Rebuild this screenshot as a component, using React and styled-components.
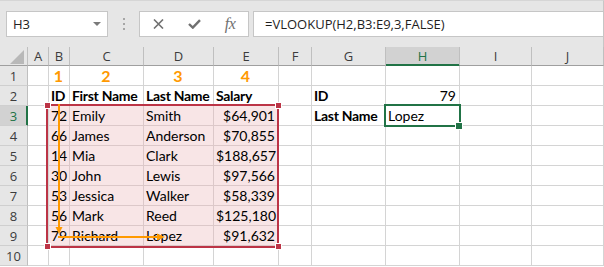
import React from 'react';
import styled, { createGlobalStyle } from 'styled-components';

const GlobalStyle = createGlobalStyle`
  html, body {
    margin: 0;
    padding: 0;
    background: #fff;
  }
  body {
    font-family: 'Open Sans', 'Liberation Sans', sans-serif;
  }
`;

const GREEN = '#217346';
const RED = '#bc3446';
const ORANGE = '#ff9900';

const COLUMNS = ['A', 'B', 'C', 'D', 'E', 'F', 'G', 'H', 'I', 'J'];
const WIDTHS = [28, 21, 21, 74, 70, 65, 33, 74, 74, 72, 72];

const people = [
    ['72', 'Emily', 'Smith', '$64,901'],
    ['66', 'James', 'Anderson', '$70,855'],
    ['14', 'Mia', 'Clark', '$188,657'],
    ['30', 'John', 'Lewis', '$97,566'],
    ['53', 'Jessica', 'Walker', '$58,339'],
    ['56', 'Mark', 'Reed', '$125,180'],
    ['79', 'Richard', 'Lopez', '$91,632'],
];

function buildRows() {
    const rows = Array.from({ length: 10 }, () => ({}));
    ['1', '2', '3', '4'].forEach((n, i) => {
        rows[0][COLUMNS[i + 1]] = { text: n, orange: true, align: 'center' };
    });
    ['ID', 'First Name', 'Last Name', 'Salary'].forEach((t, i) => {
        rows[1][COLUMNS[i + 1]] = { text: t, bold: true };
    });
    rows[1].G = { text: 'ID', bold: true };
    rows[1].H = { text: '79', align: 'right' };
    people.forEach(([id, first, last, salary], i) => {
        const row = rows[i + 2];
        row.B = { text: id, align: 'right' };
        row.C = { text: first };
        row.D = { text: last };
        row.E = { text: salary, align: 'right' };
    });
    rows[2].G = { text: 'Last Name', bold: true };
    rows[2].H = { text: 'Lopez' };
    return rows;
}

const rows = buildRows();

const Page = styled.div`
  position: relative;
  width: 604px;
  height: 267px;
  overflow: hidden;
  background: #fff;
`;

const Toolbar = styled.div`
  display: flex;
  align-items: center;
  box-sizing: border-box;
  height: 47px;
  padding-left: 6px;
  background: #e6e6e6;
  border-top: 1px solid #d6d6d6;
  border-right: 1px solid #c6c6c6;
`;

const Box = styled.div`
  display: flex;
  align-items: center;
  box-sizing: border-box;
  height: 26px;
  background: #fff;
  border: 1px solid #c6c6c6;
`;

const NameBox = styled(Box)`
  width: 102px;
  justify-content: space-between;
  padding: 0 6px 0 6px;
  font-size: 13px;
  color: #222;
`;

const Caret = styled.span`
  width: 0;
  height: 0;
  border-left: 4px solid transparent;
  border-right: 4px solid transparent;
  border-top: 4px solid #7a7a7a;
`;

const Grip = styled.div`
  display: flex;
  flex-direction: column;
  align-items: center;
  gap: 3px;
  width: 31px;
`;

const Dot = styled.span`
  width: 2px;
  height: 2px;
  background: #a6a6a6;
`;

const FxBox = styled(Box)`
  width: 110px;
`;

const IconSlot = styled.div`
  display: flex;
  align-items: center;
  justify-content: center;
  width: 36px;
  height: 100%;
  color: #707070;
`;

const FxText = styled.span`
  font-family: 'Liberation Serif', 'DejaVu Serif', serif;
  font-style: italic;
  font-size: 16px;
  letter-spacing: -0.5px;
  color: #707070;
`;

const FormulaBox = styled(Box)`
  flex: 1;
  margin-left: 4px;
  padding-left: 11px;
  border-right: none;
  font-size: 13px;
  color: #1e1e1e;
`;

const Sheet = styled.div`
  display: grid;
  grid-template-columns: ${WIDTHS.map((w) => `${w}px`).join(' ')};
  grid-template-rows: 19px repeat(10, 20px);
`;

const Corner = styled.div`
  display: flex;
  align-items: flex-end;
  justify-content: flex-end;
  box-sizing: border-box;
  padding: 0 3px 1px 0;
  background: #e6e6e6;
  border-right: 1px solid #bfbfbf;
  border-bottom: 1px solid #9f9f9f;
`;

const ColHeader = styled.div`
  box-sizing: border-box;
  padding-top: 1px;
  line-height: 17px;
  text-align: center;
  font-size: 13px;
  color: ${(p) => (p.$active ? GREEN : '#3c3c3c')};
  background: ${(p) => (p.$active ? '#d2d2d2' : '#e6e6e6')};
  border-right: 1px solid #bfbfbf;
  border-bottom: 1px solid ${(p) => (p.$active ? GREEN : '#9f9f9f')};
  box-shadow: ${(p) => (p.$active ? `inset 0 -1px 0 ${GREEN}` : 'none')};
`;

const RowHeader = styled.div`
  box-sizing: border-box;
  padding-top: 2px;
  line-height: 17px;
  text-align: center;
  font-size: 13px;
  color: ${(p) => (p.$active ? GREEN : '#3c3c3c')};
  background: ${(p) => (p.$active ? '#d2d2d2' : '#e6e6e6')};
  border-right: 1px solid ${(p) => (p.$active ? GREEN : '#bfbfbf')};
  border-bottom: 1px solid #cfcfcf;
  box-shadow: ${(p) => (p.$active ? `inset -1px 0 0 ${GREEN}` : 'none')};
`;

const Cell = styled.div`
  box-sizing: border-box;
  padding: 1px 3px 0 2px;
  line-height: 18px;
  white-space: nowrap;
  font-family: Lato, 'Liberation Sans', sans-serif;
  font-size: ${(p) => (p.$orange ? '16px' : '14px')};
  font-weight: ${(p) => (p.$bold || p.$orange ? 700 : 400)};
  letter-spacing: ${(p) => (p.$bold ? '-0.3px' : '0')};
  color: ${(p) => (p.$orange ? ORANGE : '#000')};
  text-align: ${(p) => p.$align || 'left'};
  background: ${(p) => (p.$pink ? '#f8e5e6' : '#fff')};
  border-right: 1px solid ${(p) => (p.$pink ? '#dcc8c9' : '#d4d4d4')};
  border-bottom: 1px solid ${(p) => (p.$pink ? '#dcc8c9' : '#d4d4d4')};
`;

const Overlay = styled.svg`
  position: absolute;
  left: 0;
  top: 0;
  pointer-events: none;
`;

const RangeFrame = styled.div`
  position: absolute;
  left: 46px;
  top: 104px;
  width: 233px;
  height: 144px;
  box-sizing: border-box;
  border: 2px solid ${RED};
`;

const ActiveFrame = styled.div`
  position: absolute;
  left: 384px;
  top: 104px;
  width: 77px;
  height: 23px;
  box-sizing: border-box;
  border: 2px solid ${GREEN};
`;

const Handle = styled.span`
  position: absolute;
  left: ${(p) => p.$x}px;
  top: ${(p) => p.$y}px;
  width: ${(p) => p.$size || 5}px;
  height: ${(p) => p.$size || 5}px;
  background: ${(p) => p.$color};
  box-shadow: 0 0 0 1px #fff;
`;

const isPink = (r, col) => r >= 2 && r <= 8 && ['B', 'C', 'D', 'E'].includes(col);

function App() {
    return (
        <Page>
            <GlobalStyle />
            <Toolbar>
                <NameBox>
                    H3
                    <Caret />
                </NameBox>
                <Grip>
                    <Dot />
                    <Dot />
                    <Dot />
                </Grip>
                <FxBox>
                    <IconSlot>
                        <svg width="11" height="10" viewBox="0 0 11 10">
                            <path d="M1 0.5 L10 9.5 M10 0.5 L1 9.5" stroke="currentColor" strokeWidth="1.6" fill="none" />
                        </svg>
                    </IconSlot>
                    <IconSlot>
                        <svg width="13" height="10" viewBox="0 0 13 10">
                            <path d="M1 5 L4.8 8.6 L12 1.2" stroke="currentColor" strokeWidth="2.4" fill="none" />
                        </svg>
                    </IconSlot>
                    <IconSlot>
                        <FxText>fx</FxText>
                    </IconSlot>
                </FxBox>
                <FormulaBox>=VLOOKUP(H2,B3:E9,3,FALSE)</FormulaBox>
            </Toolbar>
            <Sheet>
                <Corner>
                    <svg width="14" height="14" viewBox="0 0 14 14">
                        <polygon points="14,0 14,14 0,14" fill="#b8b8b8" />
                    </svg>
                </Corner>
                {COLUMNS.map((c) => (
                    <ColHeader key={c} $active={c === 'H'}>
                        {c}
                    </ColHeader>
                ))}
                {rows.map((row, r) => (
                    <React.Fragment key={r}>
                        <RowHeader $active={r === 2}>{r + 1}</RowHeader>
                        {COLUMNS.map((c) => {
                            const cell = row[c] || {};
                            return (
                                <Cell
                                    key={c}
                                    $pink={isPink(r, c)}
                                    $bold={cell.bold}
                                    $orange={cell.orange}
                                    $align={cell.align}
                                >
                                    {cell.text}
                                </Cell>
                            );
                        })}
                    </React.Fragment>
                ))}
            </Sheet>

            <RangeFrame />
            <Handle $x={45} $y={103} $color={RED} />
            <Handle $x={276} $y={103} $color={RED} />
            <Handle $x={45} $y={244} $color={RED} />
            <Handle $x={276} $y={244} $color={RED} />

            <ActiveFrame />
            <Handle $x={456} $y={123} $size={6} $color={GREEN} />

            <Overlay width="604" height="267" viewBox="0 0 604 267">
                <g stroke={ORANGE} strokeWidth="2" fill="none">
                    <line x1="59" y1="104" x2="59" y2="228" />
                    <line x1="58" y1="237" x2="158" y2="237" />
                </g>
                <g fill={ORANGE}>
                    <polygon points="55.5,227 62.5,227 59,234" />
                    <polygon points="157,233.5 157,240.5 165,237" />
                </g>
            </Overlay>
        </Page>
    );
}

export default App;
